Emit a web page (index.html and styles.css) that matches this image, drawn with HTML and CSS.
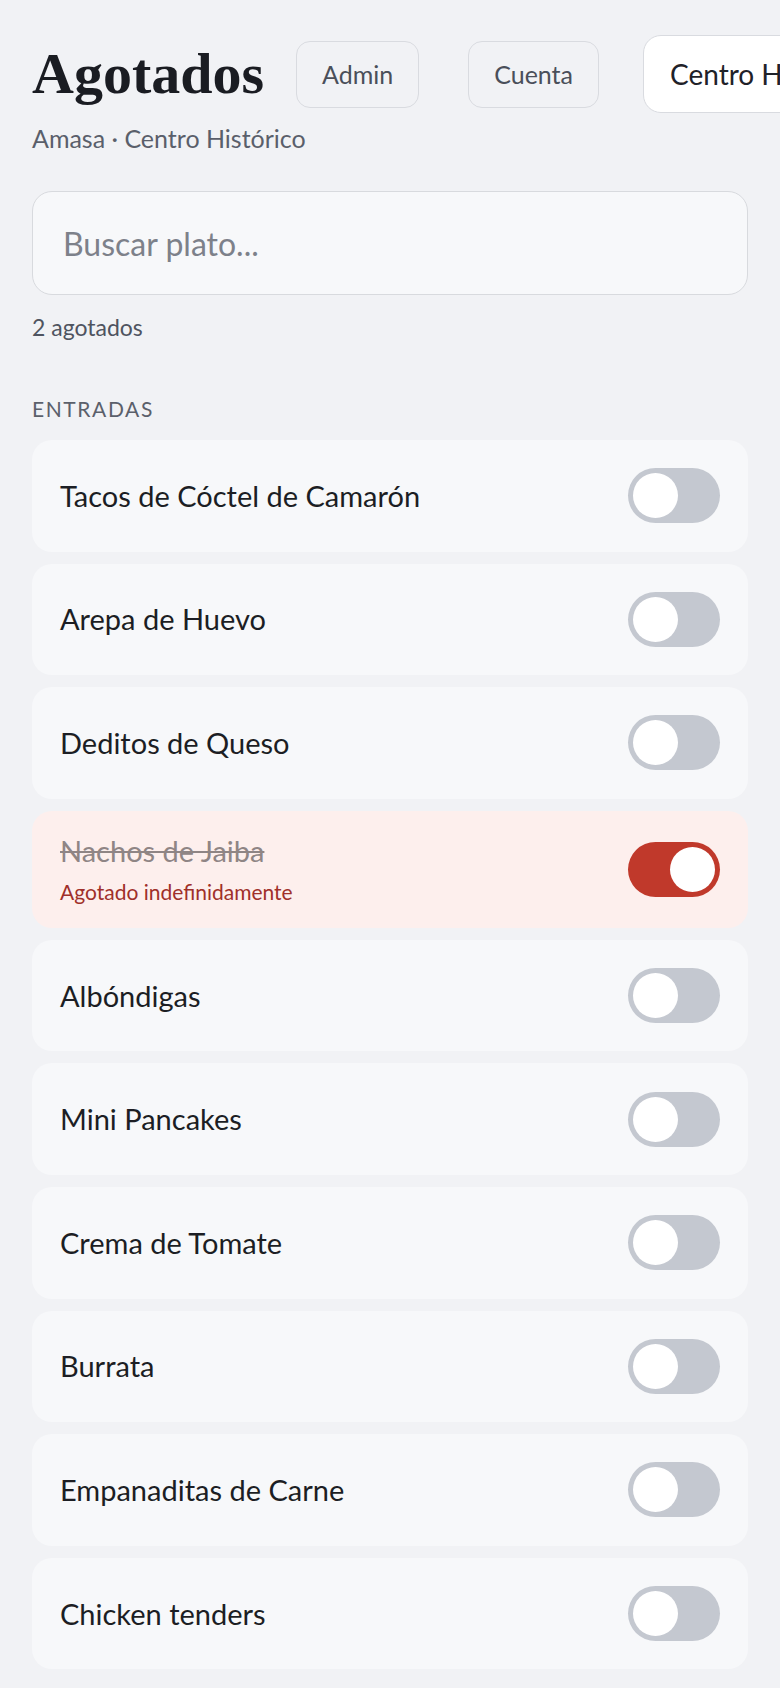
FILE: index.html
```html
<!DOCTYPE html>
<html lang="es">
<head>
  <meta charset="UTF-8">
  <meta name="viewport" content="width=device-width, initial-scale=1.0">
  <title>Agotados</title>
  <link rel="stylesheet" href="styles.css">
</head>
<body>

  <!-- Header -->
  <div class="header">
    <h1>Agotados</h1>
    <button class="nav-btn first">Admin</button>
    <button class="nav-btn">Cuenta</button>
    <div class="branch-select">Centro Histórico <span class="caret">&#9662;</span></div>
  </div>
  <div class="subtitle">Amasa · Centro Histórico</div>

  <input type="text" class="search" placeholder="Buscar plato..." />
  <div class="count">2 agotados</div>

  <div class="section-title">ENTRADAS</div>

  <div id="items" class="items"></div>

  <script>
    const items = [
      { name: 'Tacos de Cóctel de Camarón', out: false },
      { name: 'Arepa de Huevo', out: false },
      { name: 'Deditos de Queso', out: false },
      { name: 'Nachos de Jaiba', out: true },
      { name: 'Albóndigas', out: false },
      { name: 'Mini Pancakes', out: false },
      { name: 'Crema de Tomate', out: false },
      { name: 'Burrata', out: false },
      { name: 'Empanaditas de Carne', out: false },
      { name: 'Chicken tenders', out: false }
    ];

    const list = document.getElementById('items');

    function renderItems() {
      list.innerHTML = '';
      items.forEach((item, i) => {
        const row = document.createElement('div');
        row.className = 'item' + (item.out ? ' out' : '');

        const info = document.createElement('div');
        info.className = 'item-info';

        const name = document.createElement('div');
        name.className = 'item-name';
        name.textContent = item.name;
        info.appendChild(name);

        if (item.out) {
          const note = document.createElement('div');
          note.className = 'item-note';
          note.textContent = 'Agotado indefinidamente';
          info.appendChild(note);
        }

        const toggle = document.createElement('span');
        toggle.className = 'switch' + (item.out ? ' on' : '');
        toggle.innerHTML = '<span class="knob"></span>';
        toggle.addEventListener('click', () => {
          items[i].out = !items[i].out;
          renderItems();
        });

        row.appendChild(info);
        row.appendChild(toggle);
        list.appendChild(row);
      });
    }

    renderItems();
  </script>

</body>
</html>
```

FILE: styles.css
```css
body {
  font-family: 'Lato', 'Noto Sans', sans-serif;
  background: #f1f2f5;
  margin: 0;
  padding: 0 32px 21px;
  color: #1c1e24;
}
.header {
  display: flex;
  align-items: center;
  padding-top: 35px;
  height: 78px;
  margin-right: -32px;
  overflow: hidden;
}
h1 {
  font-family: 'Liberation Serif', 'Times New Roman', serif;
  font-weight: bold;
  font-size: 58px;
  line-height: 62px;
  margin: 0;
  color: #1a1c22;
  flex-shrink: 0;
}
.nav-btn {
  font-family: inherit;
  font-size: 25px;
  color: #4a4f5a;
  background: #f1f2f5;
  border: 1.5px solid #d9dbe0;
  border-radius: 14px;
  height: 67px;
  padding: 0 25px;
  margin-left: 49px;
  flex-shrink: 0;
  cursor: pointer;
}
.nav-btn.first {
  margin-left: 32px;
}
.branch-select {
  display: flex;
  align-items: center;
  flex-shrink: 0;
  height: 78px;
  box-sizing: border-box;
  margin-left: 44px;
  padding: 0 26px;
  background: #fff;
  border: 1.5px solid #d9dbe0;
  border-radius: 18px;
  font-size: 28px;
  color: #1f2229;
  white-space: nowrap;
}
.caret {
  margin-left: 14px;
  font-size: 18px;
  color: #6b7080;
}
.subtitle {
  margin-top: 10px;
  font-size: 25px;
  line-height: 30px;
  color: #5a5f6b;
}
.search {
  display: block;
  width: 100%;
  box-sizing: border-box;
  height: 104px;
  margin-top: 38px;
  padding: 0 30px;
  font-family: inherit;
  font-size: 32px;
  color: #1c1e24;
  background: #f7f8fa;
  border: 1.5px solid #d8dade;
  border-radius: 20px;
  outline: none;
}
.search::placeholder {
  color: #7d818a;
}
.count {
  margin-top: 18px;
  font-size: 23px;
  line-height: 28px;
  color: #4f5460;
}
.section-title {
  margin-top: 55px;
  font-size: 21px;
  line-height: 25px;
  letter-spacing: 1.6px;
  color: #5b606b;
}
.items {
  margin-top: 19px;
  display: flex;
  flex-direction: column;
  gap: 12px;
}
.item {
  display: flex;
  align-items: center;
  justify-content: space-between;
  min-height: 111.6px;
  padding: 0 28px;
  box-sizing: border-box;
  background: #f7f8fa;
  border-radius: 20px;
}
.item-name {
  font-size: 29px;
  line-height: 34px;
  color: #1c1e24;
}
.item.out {
  min-height: 117px;
  background: #fdefed;
}
.item.out .item-name {
  color: #8f8585;
  text-decoration: line-through;
}
.item-note {
  margin-top: 11px;
  font-size: 21px;
  line-height: 25px;
  color: #a0302a;
}
.switch {
  position: relative;
  width: 92px;
  height: 55px;
  border-radius: 28px;
  background: #c4c8d0;
  flex-shrink: 0;
  cursor: pointer;
}
.knob {
  position: absolute;
  top: 5px;
  left: 5px;
  width: 45px;
  height: 45px;
  border-radius: 50%;
  background: #fff;
}
.switch.on {
  background: #c0392b;
}
.switch.on .knob {
  left: 42px;
}
```
